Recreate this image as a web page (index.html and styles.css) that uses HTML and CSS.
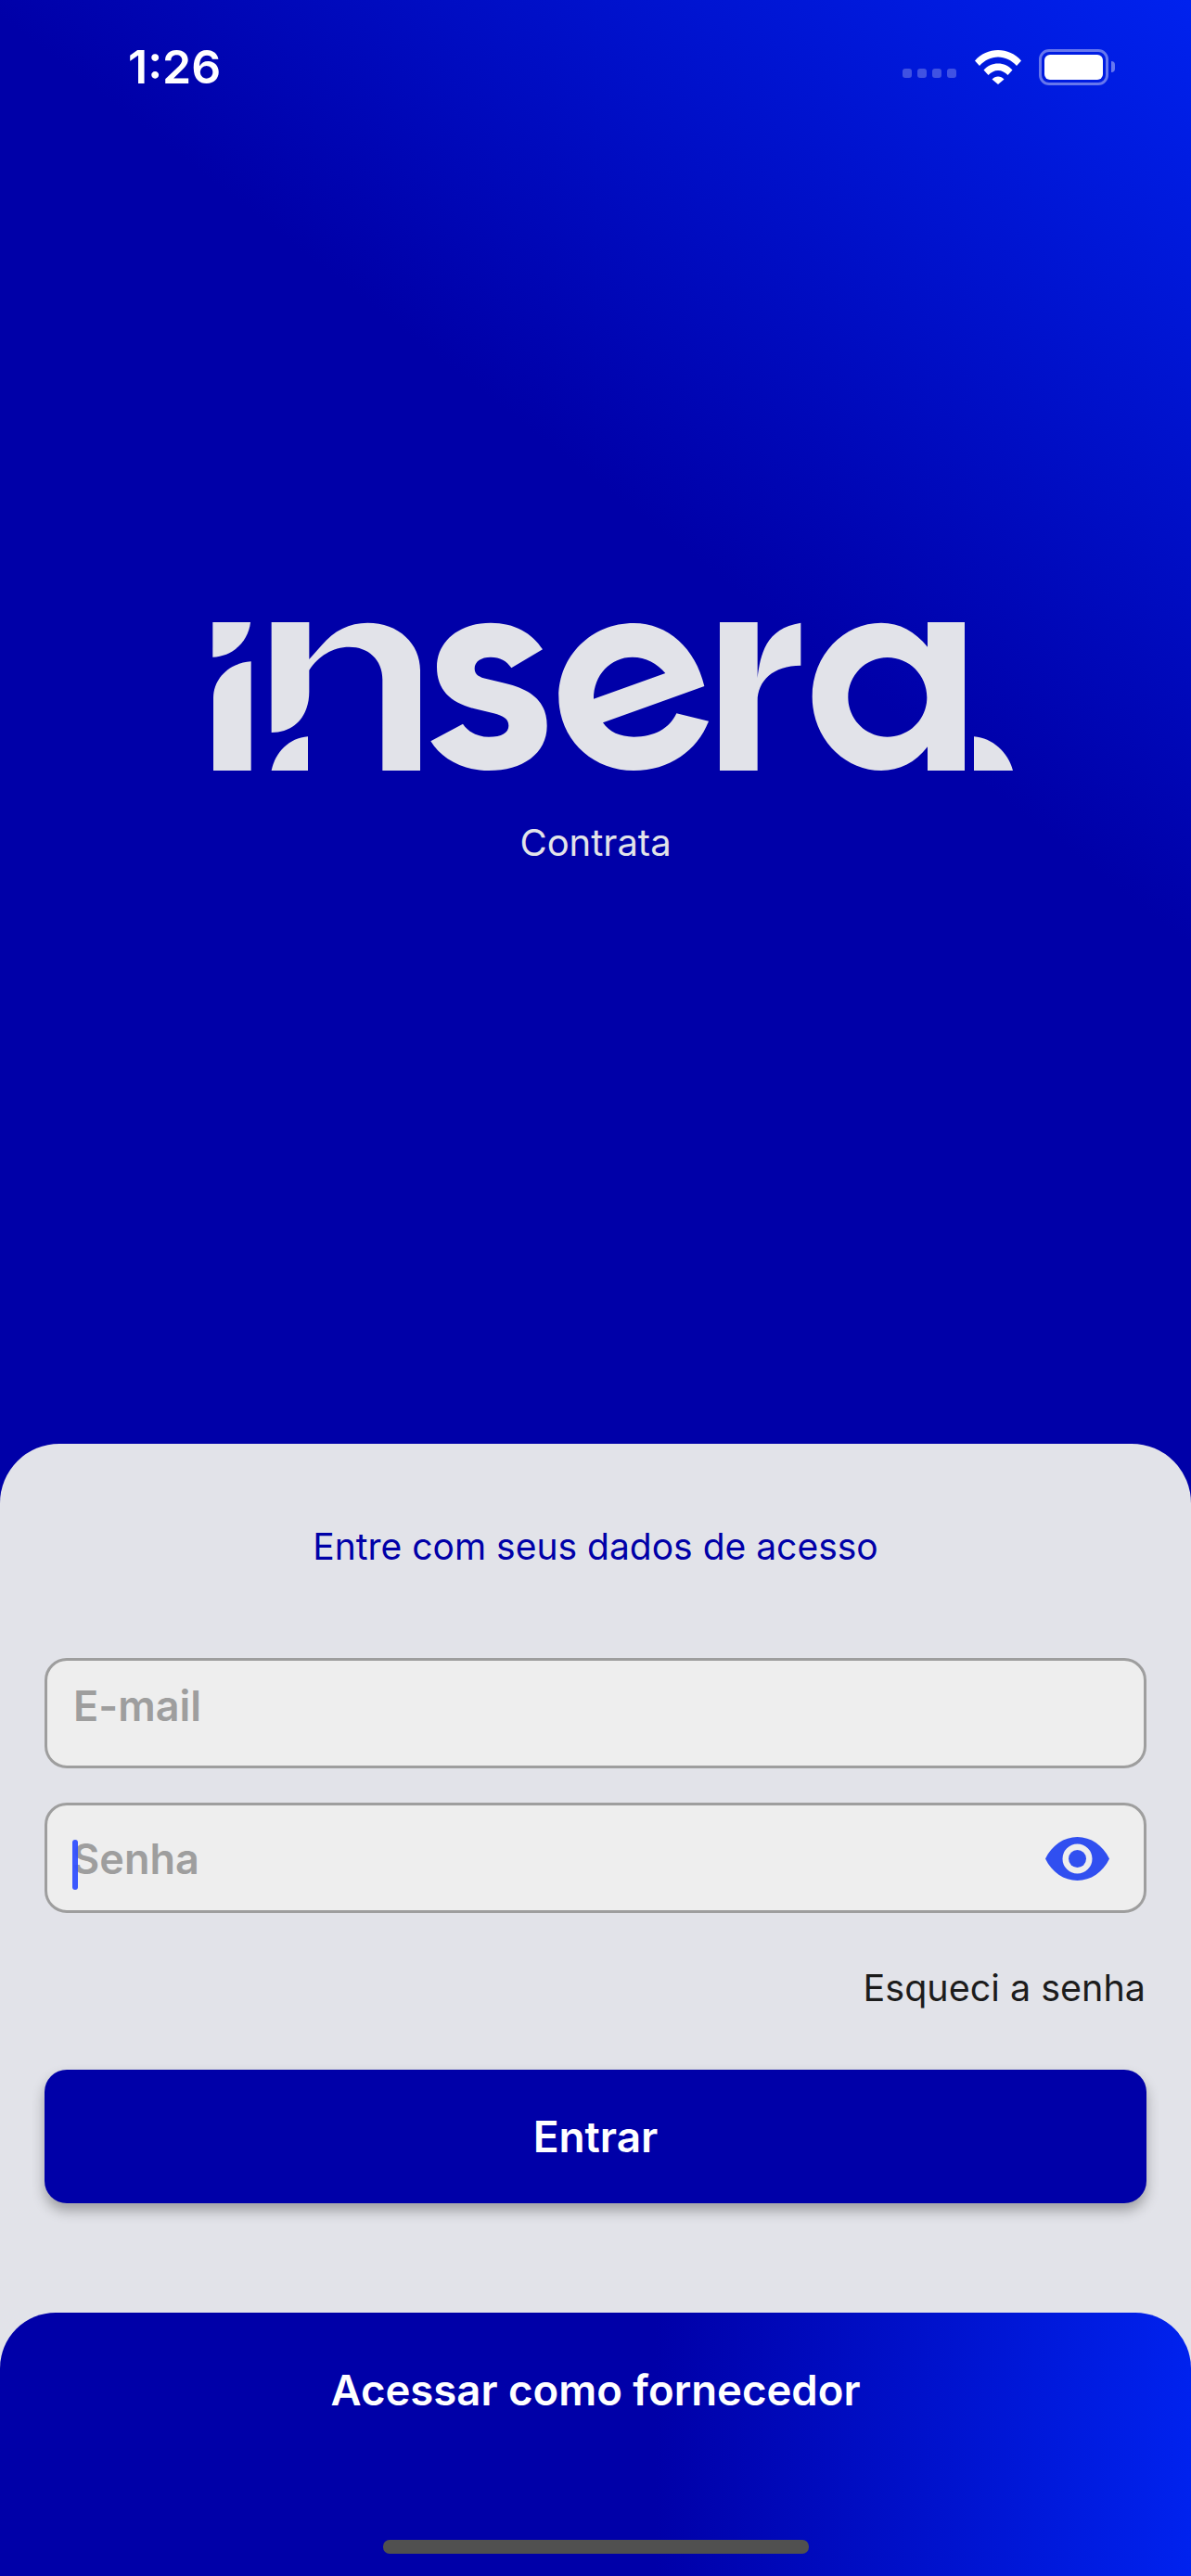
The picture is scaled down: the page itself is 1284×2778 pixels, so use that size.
FILE: index.html
```html
<!DOCTYPE html>
<html lang="pt-BR">
<head>
    <meta charset="UTF-8">
    <meta name="viewport" content="width=device-width, initial-scale=1.0">
    <title>Insera Contrata</title>
    <link rel="stylesheet" href="styles.css">
</head>
<body>
    <div class="screen">
        <div class="status-bar">
            <div class="status-time">1:26</div>
            <div class="status-icons">
                <div class="signal-dots">
                    <span></span><span></span><span></span><span></span>
                </div>
                <svg class="wifi" viewBox="0 0 50 38">
                    <path d="M0 12.500C6.500 5 15.500 1 25 1s18.500 4 25 11.500l-5 5.500C39.500 12 32.500 8.500 25 8.500S10.500 12 5 18z"/>
                    <path d="M9.500 22.500C13.500 18 19 15.500 25 15.500s11.500 2.500 15.500 7l-5 5.500C32.800 25 29 23 25 23s-7.800 2-10.500 5z"/>
                    <path d="M18.500 32.500c1.800-1.900 4-3 6.500-3s4.700 1.100 6.500 3L25 38z"/>
                </svg>
                <div class="battery">
                    <div class="battery-fill"></div>
                </div>
                <div class="battery-cap"></div>
            </div>
        </div>

        <div class="hero">
            <svg class="logo" viewBox="-24 95 2700 480">
                <path d="M88 95H210C204 155 155 205 88 208Z"/>
                <path d="M212 222V575H90V340C90 275 145 226 212 222Z"/>
                <path d="M278 95H400V215L440 170C480 122 530 97 589 97C690 97 759 165 759 250V575H637V280C637 215 590 175 530 175C475 175 430 205 400 250V320C400 395 355 452 278 452Z"/>
                <path d="M396 465C335 470 290 515 278 575H396Z"/>
                <path d="M1155 183L1054 243C1038 220 1018 208 987 208C956 208 935 222 935 245C935 265 950 273 976 279L1023 290C1111 310 1169 345 1169 430C1169 520 1090 575 981 575C894 575 826 535 793 480L897 424C914 450 945 466 981 466C1023 466 1045 452 1045 430C1045 408 1028 398 997 390L935 375C857 355 813 315 813 240C813 155 888 97 987 97C1064 97 1121 130 1155 183Z"/>
                <path fill-rule="evenodd" d="M1678 302C1650 180 1560 98 1450 98C1312 98 1207 205 1207 336C1207 470 1312 575 1450 575C1565 575 1655 510 1692 415L1588 390C1565 440 1515 466 1450 466C1405 466 1370 450 1350 420ZM1552 260C1525 228 1490 208 1445 208C1375 208 1320 265 1320 343Z"/>
                <path d="M1728 95H1850V275C1860 200 1875 115 1990 97V235C1900 235 1850 285 1850 350V575H1728Z"/>
                <path fill-rule="evenodd" d="M2400 95H2520V575H2400V498C2360 550 2310 575 2250 575C2130 575 2027 470 2027 336C2027 200 2130 97 2250 97C2310 97 2360 125 2400 175ZM2270 209C2200 209 2143 267 2143 338C2143 409 2200 466 2270 466C2341 466 2398 409 2398 338C2398 267 2341 209 2270 209Z"/>
                <path d="M2550 465C2610 470 2660 515 2676 575H2550Z"/>
            </svg>
            <div class="hero-label">Contrata</div>
        </div>

        <div class="sheet">
            <div class="login-form">
                <h2 class="form-title">Entre com seus dados de acesso</h2>
                <div class="field field-email">
                    <span class="placeholder">E-mail</span>
                </div>
                <div class="field field-password">
                    <span class="caret"></span>
                    <span class="placeholder">Senha</span>
                    <svg class="eye" viewBox="0 0 69 47">
                        <path fill-rule="evenodd" d="M0 23.500C7 9 20 0 34.500 0S62 9 69 23.500C62 38 49 47 34.500 47S7 38 0 23.500ZM34.500 7.500a16 16 0 1 0 0 32 16 16 0 1 0 0-32Z"/>
                        <circle cx="34.500" cy="23.500" r="9.500"/>
                    </svg>
                </div>
                <div class="forgot">Esqueci a senha</div>
                <button class="login-btn">Entrar</button>
            </div>
            <div class="supplier-panel">
                <div class="supplier-link">Acessar como fornecedor</div>
                <div class="home-indicator"></div>
            </div>
        </div>
    </div>
</body>
</html>
```

FILE: styles.css
```css
html, body {
    margin: 0;
    padding: 0;
}

body {
    font-family: Inter, "Liberation Sans", sans-serif;
}

.screen {
    width: 1284px;
    height: 2778px;
    display: flex;
    flex-direction: column;
    overflow: hidden;
    background: linear-gradient(38deg, #0000a8 73%, #0022ee 100%);
}

/* status bar */
.status-bar {
    height: 144px;
    flex-shrink: 0;
    box-sizing: border-box;
    padding: 46px 82px 0 138px;
    display: flex;
    justify-content: space-between;
    align-items: flex-start;
}

.status-time {
    color: white;
    font-size: 50px;
    font-weight: 600;
    line-height: 52px;
}

.status-icons {
    display: flex;
    align-items: center;
    height: 40px;
    margin-top: 6px;
}

.signal-dots {
    display: flex;
    gap: 6px;
    margin: 14px 20px 0 0;
}

.signal-dots span {
    width: 10px;
    height: 10px;
    border-radius: 3px;
    background: rgba(255,255,255,0.25);
}

.wifi {
    width: 50px;
    height: 38px;
    fill: white;
    margin-right: 19px;
}

.battery {
    width: 75px;
    height: 39px;
    box-sizing: border-box;
    border: 3px solid rgba(255,255,255,0.4);
    border-radius: 11px;
    padding: 3px;
}

.battery-fill {
    height: 100%;
    background: white;
    border-radius: 6px;
}

.battery-cap {
    width: 4px;
    height: 12px;
    margin-left: 3px;
    border-radius: 0 4px 4px 0;
    background: rgba(255,255,255,0.4);
}

/* logo */
.hero {
    flex: 1;
    padding-top: 527px;
    text-align: center;
}

.logo {
    display: block;
    width: 900px;
    height: 160px;
    margin: 0 auto;
    fill: #e2e3e9;
}

.hero-label {
    margin-top: 53px;
    color: #e2e3e9;
    font-size: 40px;
    line-height: 50px;
}

/* login */
.sheet {
    height: 1221px;
    flex-shrink: 0;
    display: flex;
    flex-direction: column;
    background: #e2e3e9;
    border-radius: 64px 64px 0 0;
}

.login-form {
    flex: 1;
    padding: 85px 48px 0;
}

.form-title {
    margin: 0 0 94px;
    color: #0000a8;
    font-size: 39px;
    font-weight: 400;
    line-height: 52px;
    text-align: center;
}

.field {
    position: relative;
    height: 119px;
    box-sizing: border-box;
    display: flex;
    align-items: center;
    padding: 0 30px 0 28px;
    background: #eeeeee;
    border: 3px solid #9e9e9e;
    border-radius: 24px;
    color: #9e9e9e;
    font-size: 45px;
    font-weight: 600;
}

.field-email {
    padding-bottom: 16px;
}

.field-password {
    margin-top: 37px;
    justify-content: space-between;
    padding-top: 2px;
    padding-left: 27px;
}

.caret {
    position: absolute;
    left: 27px;
    top: 37px;
    width: 6px;
    height: 54px;
    border-radius: 3px;
    background: #304ffe;
    opacity: 0.95;
}

.eye {
    width: 69px;
    height: 47px;
    margin-right: 7px;
    fill: #304ff0;
}

.forgot {
    margin-top: 57px;
    padding-right: 1px;
    color: #1c1c1c;
    font-size: 39.500px;
    line-height: 48px;
    text-align: right;
}

.login-btn {
    display: block;
    width: 100%;
    height: 144px;
    margin-top: 64px;
    border: none;
    border-radius: 24px;
    background: #0000a8;
    color: white;
    font-family: inherit;
    font-size: 46px;
    font-weight: 600;
    box-shadow: 0 8px 14px rgba(0,0,0,0.3);
}

.supplier-panel {
    position: relative;
    height: 284px;
    flex-shrink: 0;
    box-sizing: border-box;
    padding-top: 56px;
    border-radius: 60px 60px 0 0;
    background: linear-gradient(90deg, #0000a8 55%, #0022ee 100%);
}

.supplier-link {
    color: white;
    font-size: 45.500px;
    font-weight: 600;
    line-height: 56px;
    text-align: center;
}

.home-indicator {
    position: absolute;
    left: 413px;
    bottom: 24px;
    width: 459px;
    height: 15px;
    border-radius: 7px;
    background: #505050;
}
```
